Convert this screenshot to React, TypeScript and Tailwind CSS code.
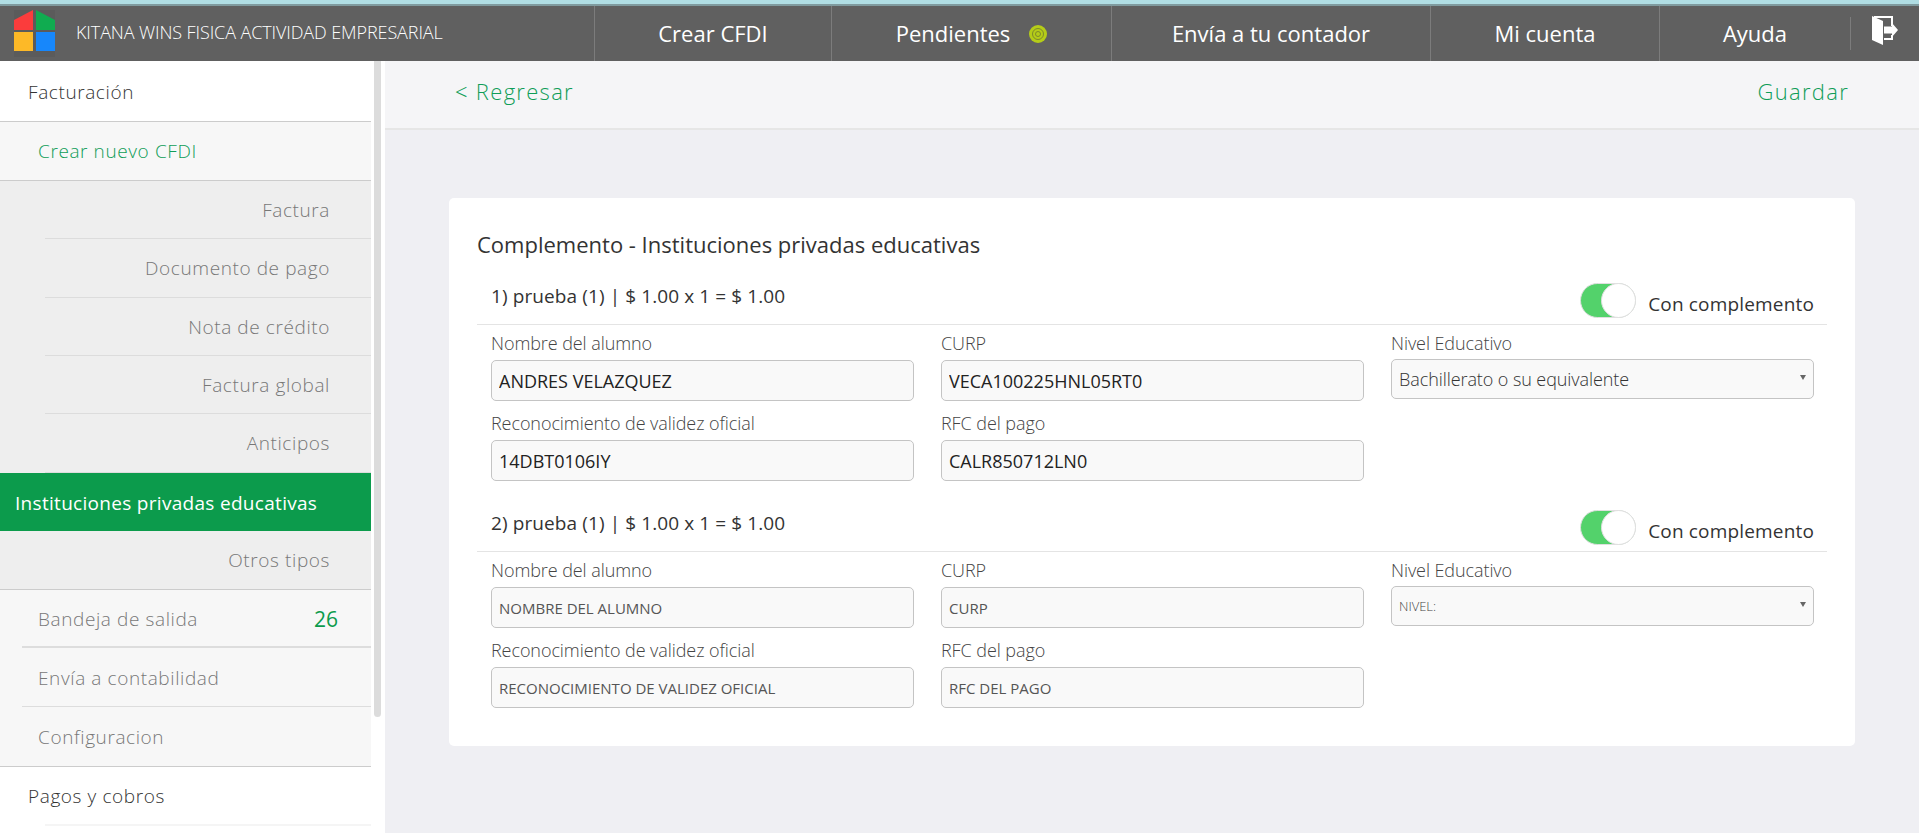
import React from "react";

const subItems = [
  { label: "Factura", h: "h-[58px]" },
  { label: "Documento de pago", h: "h-[59px]" },
  { label: "Nota de crédito", h: "h-[58px]" },
  { label: "Factura global", h: "h-[58px]" },
  { label: "Anticipos", h: "h-[59px]" },
];

function Logo() {
  return (
    <svg width="41" height="47" viewBox="0 0 41 47" className="shrink-0 bg-[#5b5b5b]">
      <polygon points="0,10 19,0 19,20 0,20" fill="#fb3c3c" />
      <polygon points="22,0 41,10 41,20 22,20" fill="#10ac50" />
      <rect x="0" y="22" width="19" height="19" fill="#fdb927" />
      <rect x="22" y="22" width="19" height="19" fill="#1787fb" />
    </svg>
  );
}

function Exit() {
  return (
    <svg width="26" height="30" viewBox="0 0 26 30" className="shrink-0">
      <polygon points="0,0 11,5 11,29 0,24" fill="#fff" />
      <path d="M2 1 H20 V10 M12 23 H20 V19" fill="none" stroke="#fff" strokeWidth="2" />
      <polygon points="12,10.5 20,10.5 20,7 26,14 20,21 20,17.5 12,17.5" fill="#fff" />
    </svg>
  );
}

function Bullseye() {
  return (
    <svg width="18" height="18" viewBox="0 0 18 18" className="shrink-0">
      <circle cx="9" cy="9" r="9" fill="#b5cc18" />
      <circle cx="9" cy="9" r="5.5" fill="none" stroke="#7d8a2a" strokeWidth="1" />
      <circle cx="9" cy="9" r="2.5" fill="none" stroke="#7d8a2a" strokeWidth="1" />
    </svg>
  );
}

function NavItem({ w, children }: { w: string; children: React.ReactNode }) {
  return (
    <div className={`${w} h-full shrink-0 border-l border-[#7c7c7c] flex items-center justify-center gap-[19px] text-[22px] text-white`}>
      {children}
    </div>
  );
}

function Field({ label, value, filled }: { label: string; value: string; filled: boolean }) {
  return (
    <div className="flex flex-col">
      <div className="h-[35px] pt-[6px] text-[18px] leading-[24px] font-light text-[#444] tracking-[-0.08px]">{label}</div>
      <input
        readOnly
        value={filled ? value : ""}
        placeholder={filled ? "" : value}
        className={
          filled
            ? "h-[41px] w-full rounded-[5px] border border-[#c4c4c4] bg-[#f9f9f9] px-[7px] text-[18px] text-[#222] outline-none"
            : "h-[41px] w-full rounded-[5px] border border-[#c4c4c4] bg-[#f9f9f9] px-[7px] pt-[1px] text-[15px] text-[#222] outline-none placeholder:text-[#555] placeholder:opacity-100"
        }
      />
    </div>
  );
}

function Item({
  n,
  nombre,
  curp,
  nivel,
  rec,
  rfc,
  filled,
}: {
  n: number;
  nombre: string;
  curp: string;
  nivel: string;
  rec: string;
  rfc: string;
  filled: boolean;
}) {
  return (
    <section className="pb-[6px]">
      <div className="h-[65px] border-b border-[#e4e4e4] pl-[14px] pr-[13px] flex justify-between">
        <div className="pt-[23px] text-[19px] leading-[26px] tracking-[0.1px] text-[#333]">
          {n}) prueba (1) | $ 1.00 x 1 = $ 1.00
        </div>
        <div className="pt-[23px] flex items-start gap-3">
          <div className="relative h-[35px] w-[56px] rounded-full border border-[#dfdfdf] bg-[#53d26b]">
            <div className="absolute right-[-1px] top-[-1px] h-[35px] w-[35px] rounded-full border border-[#dfdfdf] bg-white" />
          </div>
          <div className="pt-[8px] text-[19px] leading-[26px] tracking-[0.17px] text-[#333]">Con complemento</div>
        </div>
      </div>
      <div className="pl-[14px] pr-[13px] grid grid-cols-3 gap-x-[27px] gap-y-[4px]">
        <Field label="Nombre del alumno" value={nombre} filled={filled} />
        <Field label="CURP" value={curp} filled={filled} />
        <div className="flex flex-col">
          <div className="h-[34px] pt-[6px] text-[18px] leading-[24px] font-light text-[#444] tracking-[-0.08px]">Nivel Educativo</div>
          <div className="relative">
            <select
              defaultValue={nivel}
              className={
                filled
                  ? "h-[40px] w-full appearance-none rounded-[5px] border border-[#c4c4c4] bg-[#f9f9f9] px-[7px] text-[18px] font-light tracking-[-0.08px] text-[#333] outline-none"
                  : "h-[40px] w-full appearance-none rounded-[5px] border border-[#c4c4c4] bg-[#f9f9f9] px-[7px] pt-[2px] text-[13px] font-light text-[#444] outline-none"
              }
            >
              <option>{nivel}</option>
            </select>
            <div className="absolute right-[8px] top-[16px] h-0 w-0 border-x-[3px] border-t-[5px] border-x-transparent border-t-[#666]" />
          </div>
        </div>
        <Field label="Reconocimiento de validez oficial" value={rec} filled={filled} />
        <Field label="RFC del pago" value={rfc} filled={filled} />
      </div>
    </section>
  );
}

export default function App() {
  return (
    <div className="h-screen w-full flex flex-col overflow-hidden font-['Open_Sans',sans-serif] bg-white">
      <div className="h-[4px] shrink-0 bg-[#b0dde3]" />
      <div className="h-[2px] shrink-0 bg-[#7f9a9e]" />
      <header className="h-[55px] shrink-0 bg-[#606060] flex items-stretch">
        <div className="w-[594px] shrink-0 pl-[14px] pt-[4px] flex items-start gap-[21px]">
          <Logo />
          <span className="pt-[10px] text-[18px] leading-[24px] text-white font-light tracking-[-0.1px]">
            KITANA WINS FISICA ACTIVIDAD EMPRESARIAL
          </span>
        </div>
        <NavItem w="w-[237px]">Crear CFDI</NavItem>
        <NavItem w="w-[280px]">
          <span>Pendientes</span>
          <Bullseye />
        </NavItem>
        <NavItem w="w-[319px]">Envía a tu contador</NavItem>
        <NavItem w="w-[229px]">Mi cuenta</NavItem>
        <NavItem w="w-[191px]">Ayuda</NavItem>
        <div className="flex-1 relative">
          <div className="absolute left-0 top-[11px] h-[33px] w-px bg-[#7c7c7c]" />
          <div className="absolute left-[22px] top-[10px]">
            <Exit />
          </div>
        </div>
      </header>

      <div className="flex-1 min-h-0 flex">
        <aside className="w-[385px] shrink-0 flex bg-white">
          <nav className="w-[371px] shrink-0 text-[19px] tracking-[0.6px]">
            <div className="h-[61px] border-b border-[#cccccc] pl-[28px] pt-[3px] flex items-center text-[#333] font-light">Facturación</div>
            <div className="h-[59px] border-b border-[#cccccc] bg-[#f7f7f7] pl-[38px] pt-[1px] flex items-center text-[#0f9d58] font-light">Crear nuevo CFDI</div>
            {subItems.map((s) => (
              <div key={s.label} className={`${s.h} bg-[#eeeeee] pl-[45px]`}>
                <div className="h-full border-b border-[#dcdcdc] pr-[41px] pt-[1px] flex items-center justify-end text-[#777] font-light">{s.label}</div>
              </div>
            ))}
            <div className="h-[58px] bg-[#0c9b4c] pl-[15px] pt-[2px] flex items-center text-white tracking-[0.3px]">Instituciones privadas educativas</div>
            <div className="h-[59px] bg-[#eeeeee] border-b border-[#cccccc] pr-[41px] pt-[1px] flex items-center justify-end text-[#777] font-light">Otros tipos</div>
            <div className="h-[58px] bg-[#f7f7f7] pl-[22px]">
              <div className="h-full border-b-2 border-[#dddddd] pl-[16px] pr-[33px] pt-[3px] flex items-center justify-between text-[#777] font-light">
                <span>Bandeja de salida</span>
                <span className="text-[21px] tracking-normal font-normal text-[#0c9b4c]">26</span>
              </div>
            </div>
            <div className="h-[59px] bg-[#f7f7f7] pl-[22px]">
              <div className="h-full border-b border-[#dddddd] pl-[16px] pt-[3px] flex items-center text-[#777] font-light">Envía a contabilidad</div>
            </div>
            <div className="h-[60px] bg-[#f7f7f7] border-b border-[#cccccc] pl-[38px] pt-[1px] flex items-center text-[#777] font-light">Configuracion</div>
            <div className="h-[57px] pl-[28px] pt-[1px] flex items-center text-[#333] font-light">Pagos y cobros</div>
            <div className="ml-[45px] h-[2px] bg-[#f5f5f5]" />
          </nav>
          <div className="ml-[3px] w-[7px] h-[656px] rounded-b-[4px] bg-[#dcdcdc]" />
        </aside>

        <main className="flex-1 min-w-0 bg-[#efeff3]">
          <div className="h-[69px] border-b-2 border-[#e6e6e6] bg-[#f5f5f7] px-[70px] pb-[6px] flex items-center justify-between text-[22px] font-light text-[#0f9d58] tracking-[1.3px]">
            <span>&lt; Regresar</span>
            <span>Guardar</span>
          </div>
          <div className="mt-[68px] ml-[64px] mr-[64px] h-[548px] rounded-[5px] bg-white pt-[31px] pl-[28px] pr-[28px]">
            <h1 className="mb-[1px] text-[22px] leading-[30px] text-[#333]">Complemento - Instituciones privadas educativas</h1>
            <Item
              n={1}
              nombre="ANDRES VELAZQUEZ"
              curp="VECA100225HNL05RT0"
              nivel="Bachillerato o su equivalente"
              rec="14DBT0106IY"
              rfc="CALR850712LN0"
              filled
            />
            <Item
              n={2}
              nombre="NOMBRE DEL ALUMNO"
              curp="CURP"
              nivel="NIVEL:"
              rec="RECONOCIMIENTO DE VALIDEZ OFICIAL"
              rfc="RFC DEL PAGO"
              filled={false}
            />
          </div>
        </main>
      </div>
    </div>
  );
}
